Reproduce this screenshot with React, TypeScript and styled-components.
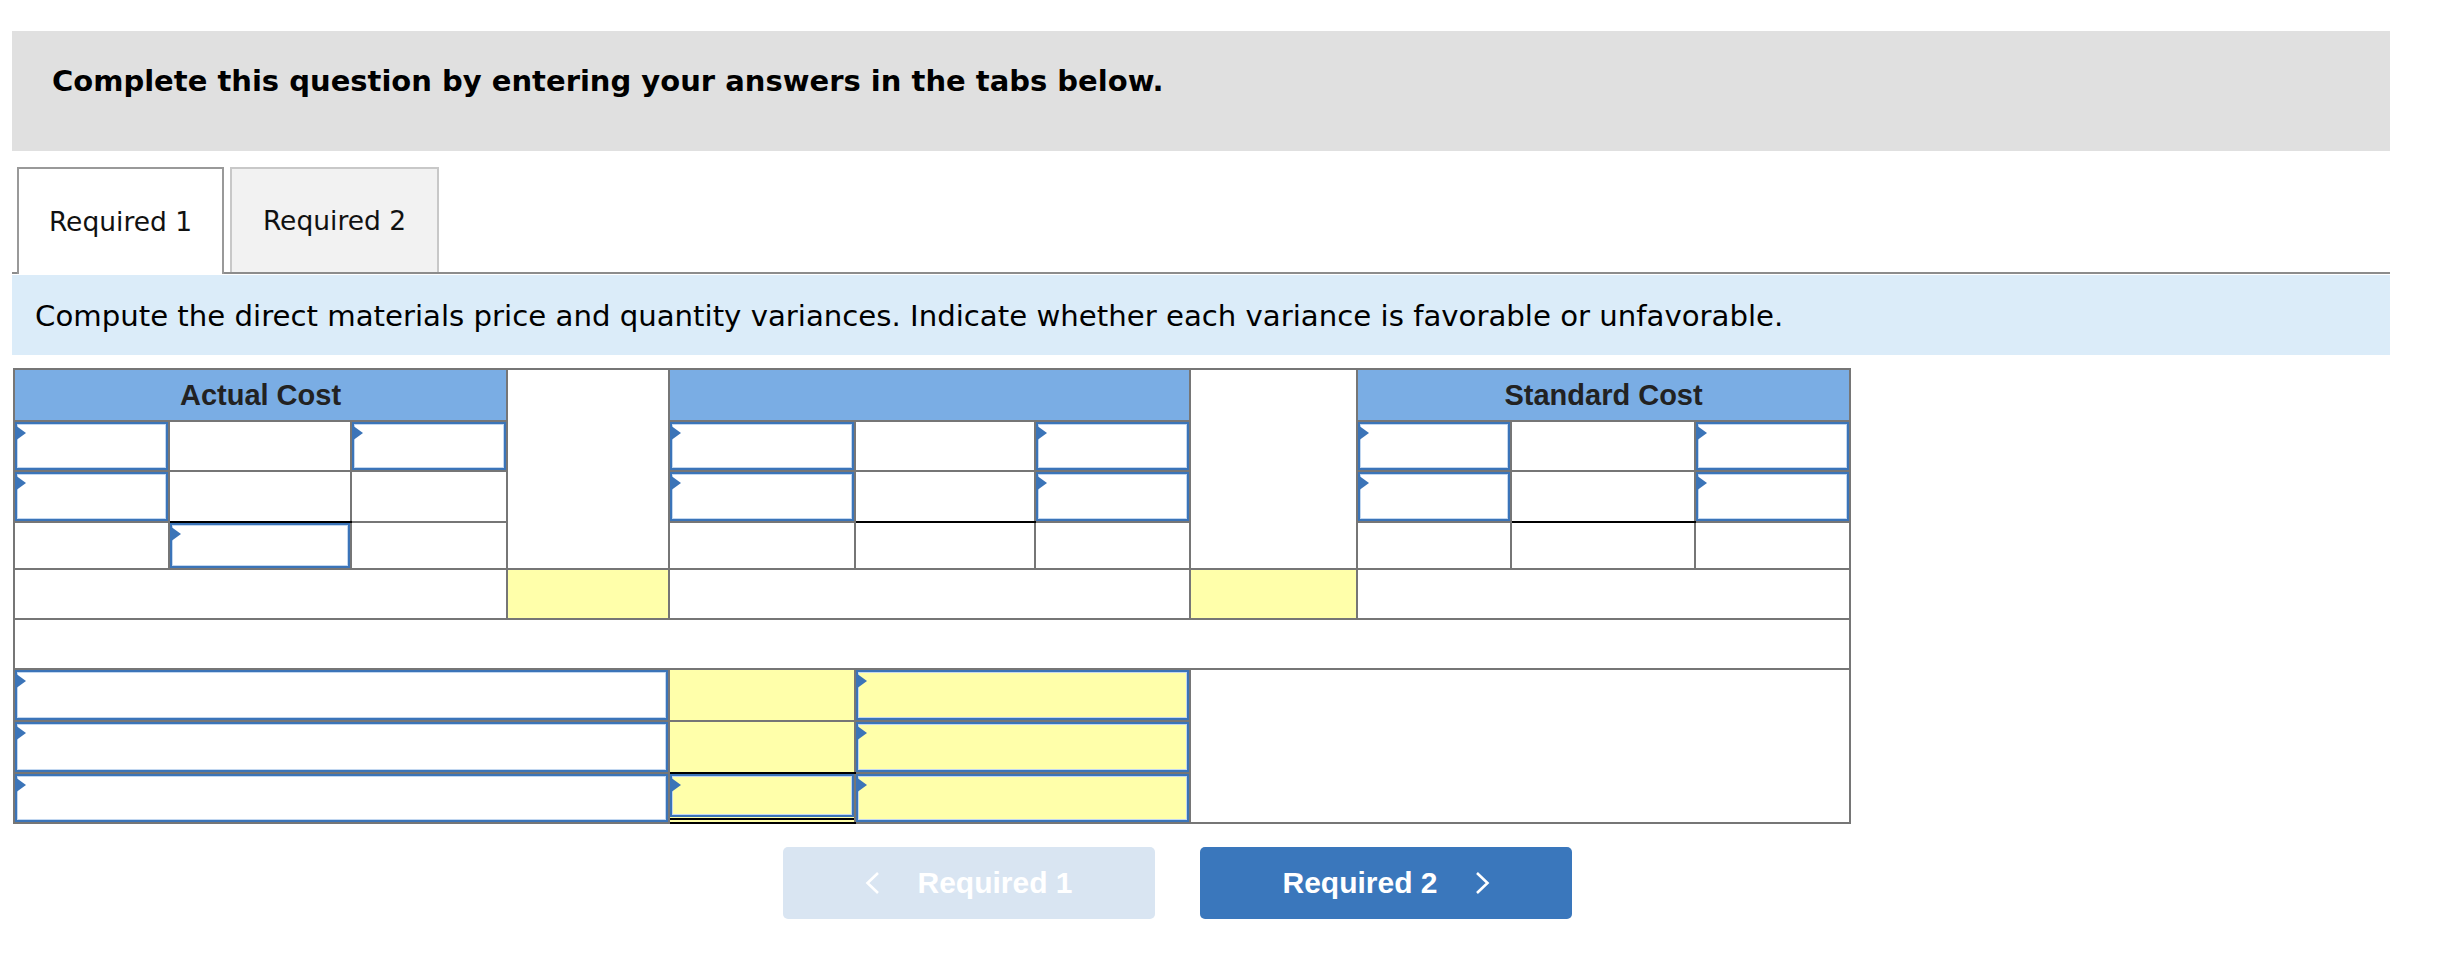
import React from "react";
import styled, { createGlobalStyle, css } from "styled-components";

const GlobalStyle = createGlobalStyle`
  html, body {
    margin: 0;
    padding: 0;
    background: #fff;
  }
  body {
    font-family: "DejaVu Sans", Verdana, sans-serif;
    color: #000;
  }
`;

const Page = styled.div`
  width: 2378px;
  padding: 31px 0 40px 12px;
`;

const Banner = styled.div`
  height: 120px;
  box-sizing: border-box;
  background: #e0e0e0;
  padding: 33px 0 0 40px;
  font-weight: bold;
  font-size: 29px;
  line-height: 34px;
`;

const TabBar = styled.div`
  display: flex;
  align-items: flex-end;
  gap: 6px;
  margin-top: 16px;
  padding-left: 5px;
  height: 105px;
  border-bottom: 2px solid #8c8c8c;
`;

const Tab = styled.div<{ $active?: boolean }>`
  box-sizing: border-box;
  width: ${(p) => (p.$active ? 207 : 209)}px;
  display: flex;
  align-items: center;
  justify-content: center;
  font-size: 26.5px;
  color: #111;
  ${(p) =>
    p.$active
      ? css`
          height: 107px;
          margin-bottom: -2px;
          background: #fff;
          border: 2px solid #999;
          border-bottom: none;
        `
      : css`
          height: 105px;
          background: #f2f2f2;
          border: 2px solid #c8c8c8;
          border-bottom: none;
        `}
`;

const Prompt = styled.div`
  margin-top: 1px;
  height: 80px;
  box-sizing: border-box;
  background: #dbecf9;
  padding: 25px 0 0 23px;
  font-size: 29.2px;
  line-height: 32px;
`;

const Sheet = styled.table`
  border-collapse: collapse;
  table-layout: fixed;
  width: 1836px;
  margin: 13px 0 0 1px;
  font-family: "Liberation Sans", Arial, sans-serif;
`;

const Row = styled.tr<{ $h: number }>`
  height: ${(p) => p.$h}px;
`;

const HeadCell = styled.th<{ $blank?: boolean }>`
  border: 2px solid #767676;
  padding: 0;
  background: ${(p) => (p.$blank ? "#fff" : "#7aade4")};
  color: #222;
  font-size: 29px;
  font-weight: bold;
  text-align: center;
  vertical-align: middle;
`;

type Fill = "white" | "yellow";

const Cell = styled.td<{ $fill?: Fill; $under?: boolean }>`
  border: 2px solid #767676;
  padding: 0;
  vertical-align: top;
  background: ${(p) => (p.$fill === "yellow" ? "#ffffaa" : "#fff")};
  ${(p) =>
    p.$under &&
    css`
      border-bottom-color: #000;
    `}
`;

const Field = styled.div<{ $h: number; $fill?: Fill }>`
  position: relative;
  box-sizing: border-box;
  height: ${(p) => p.$h}px;
  border: 2px solid #3b74b8;
  box-shadow: inset 0 0 0 1px #c2d7f0;
  background: ${(p) => (p.$fill === "yellow" ? "#ffffaa" : "#fff")};

  &::before {
    content: "";
    position: absolute;
    left: -2px;
    top: 1px;
    border-left: 11px solid #3b74b8;
    border-top: 8px solid transparent;
    border-bottom: 8px solid transparent;
  }
`;

const DoubleRule = styled.div`
  margin-top: 1px;
  height: 2px;
  background: #000;
`;

const Nav = styled.div`
  display: flex;
  gap: 45px;
  margin: 23px 0 0 771px;
`;

const NavButton = styled.button<{ $off?: boolean }>`
  width: 372px;
  height: 72px;
  border: none;
  border-radius: 5px;
  background: ${(p) => (p.$off ? "#d9e5f2" : "#3a77bc")};
  color: #fff;
  font-family: "Liberation Sans", Arial, sans-serif;
  font-weight: bold;
  font-size: 30px;
  display: flex;
  align-items: center;
  justify-content: center;
  gap: 37px;
  padding: 0;
  cursor: ${(p) => (p.$off ? "default" : "pointer")};
`;

const Chevron = ({ dir }: { dir: "left" | "right" }) => (
  <svg width="15" height="22" viewBox="0 0 15 22">
    <polyline
      points={dir === "left" ? "13,1 2.5,11 13,21" : "2,1 12.5,11 2,21"}
      fill="none"
      stroke="#fff"
      strokeWidth="2.6"
    />
  </svg>
);

const cols = [155, 182, 156, 162, 186, 180, 155, 167, 154, 184, 155];

export default function App() {
  return (
    <>
      <GlobalStyle />
      <Page>
        <Banner>Complete this question by entering your answers in the tabs below.</Banner>

        <TabBar>
          <Tab $active>Required 1</Tab>
          <Tab>Required 2</Tab>
        </TabBar>

        <Prompt>
          Compute the direct materials price and quantity variances. Indicate whether each variance is
          favorable or unfavorable.
        </Prompt>

        <Sheet>
          <colgroup>
            {cols.map((w, i) => (
              <col key={i} style={{ width: w }} />
            ))}
          </colgroup>
          <tbody>
            <Row $h={52}>
              <HeadCell colSpan={3}>Actual Cost</HeadCell>
              <HeadCell $blank rowSpan={4} />
              <HeadCell colSpan={3} />
              <HeadCell $blank rowSpan={4} />
              <HeadCell colSpan={3}>Standard Cost</HeadCell>
            </Row>
            <Row $h={50}>
              <Cell><Field $h={48} /></Cell>
              <Cell />
              <Cell><Field $h={48} /></Cell>
              <Cell><Field $h={48} /></Cell>
              <Cell />
              <Cell><Field $h={48} /></Cell>
              <Cell><Field $h={48} /></Cell>
              <Cell />
              <Cell><Field $h={48} /></Cell>
            </Row>
            <Row $h={51}>
              <Cell><Field $h={49} /></Cell>
              <Cell $under />
              <Cell />
              <Cell><Field $h={49} /></Cell>
              <Cell $under />
              <Cell><Field $h={49} /></Cell>
              <Cell><Field $h={49} /></Cell>
              <Cell $under />
              <Cell><Field $h={49} /></Cell>
            </Row>
            <Row $h={47}>
              <Cell />
              <Cell><Field $h={45} /></Cell>
              <Cell />
              <Cell />
              <Cell />
              <Cell />
              <Cell />
              <Cell />
              <Cell />
            </Row>
            <Row $h={50}>
              <Cell colSpan={3} />
              <Cell $fill="yellow" />
              <Cell colSpan={3} />
              <Cell $fill="yellow" />
              <Cell colSpan={3} />
            </Row>
            <Row $h={50}>
              <Cell colSpan={11} />
            </Row>
            <Row $h={52}>
              <Cell colSpan={4}><Field $h={50} /></Cell>
              <Cell $fill="yellow" />
              <Cell colSpan={2}><Field $h={50} $fill="yellow" /></Cell>
              <Cell colSpan={4} rowSpan={3} />
            </Row>
            <Row $h={52}>
              <Cell colSpan={4}><Field $h={50} /></Cell>
              <Cell $fill="yellow" $under />
              <Cell colSpan={2}><Field $h={50} $fill="yellow" /></Cell>
            </Row>
            <Row $h={50}>
              <Cell colSpan={4}><Field $h={48} /></Cell>
              <Cell $fill="yellow" $under>
                <Field $h={43} $fill="yellow" />
                <DoubleRule />
              </Cell>
              <Cell colSpan={2}><Field $h={48} $fill="yellow" /></Cell>
            </Row>
          </tbody>
        </Sheet>

        <Nav>
          <NavButton $off>
            <Chevron dir="left" />
            <span>Required 1</span>
          </NavButton>
          <NavButton>
            <span>Required 2</span>
            <Chevron dir="right" />
          </NavButton>
        </Nav>
      </Page>
    </>
  );
}
